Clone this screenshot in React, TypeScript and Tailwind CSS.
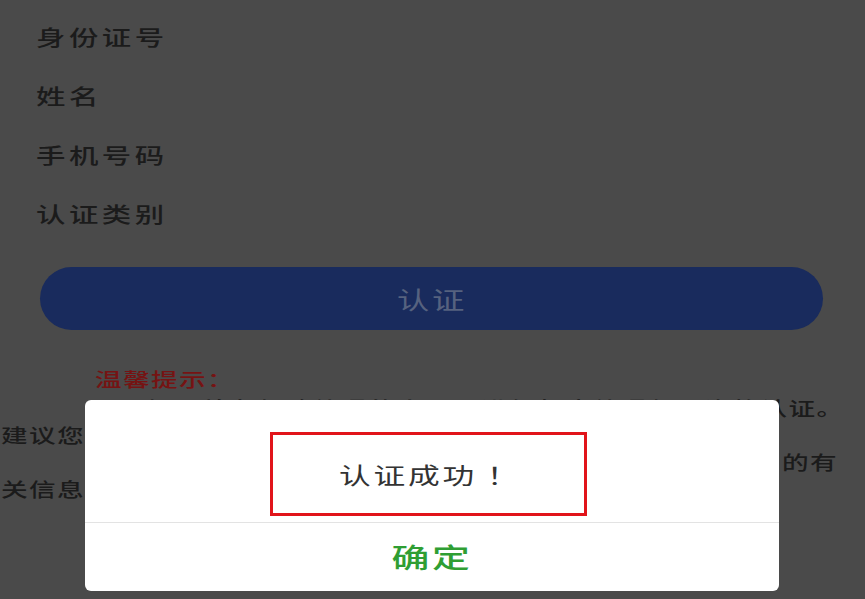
const cjk = { fontFamily: '"Noto Sans CJK SC", "Noto Sans", sans-serif' };

const fields = ['身份证号', '姓名', '手机号码', '认证类别'];

export default function App() {
  return (
    <div className="relative w-[865px] h-[599px] overflow-hidden bg-[#4a4a4a]" style={cjk}>
      {/* 表单 */}
      <div className="pt-[7px]">
        {fields.map((label) => (
          <div key={label} className="h-[59px] flex items-center pl-[36px]">
            <span className="inline-block origin-left scale-x-[1.4] text-[21px] font-medium tracking-[2.5px] text-[#1b1b1b]">
              {label}
            </span>
          </div>
        ))}
      </div>

      <div className="mt-[24px] ml-[40px] w-[783px] h-[63px] rounded-full bg-[#192b5d] flex items-center justify-center">
        <span className="inline-block scale-x-[1.35] text-[24px] tracking-[2px] text-[#56627f]">认证</span>
      </div>

      {/* 温馨提示 */}
      <div className="mt-[36px] pl-[95px] h-[26px] flex items-center">
        <span className="inline-block origin-left scale-x-[1.4] text-[19px] font-medium tracking-[1px] text-[#761313]">
          温馨提示：
        </span>
      </div>
      <div className="text-[19px] font-medium text-[#1b1b1b] leading-[27px] whitespace-nowrap">
        <div className="pl-[100px] pt-[2px]">
          <span className="inline-block origin-left scale-x-[1.4] tracking-[1px]">1、领取养老保险待遇的人员需进行年度待遇领取资格认证。</span>
        </div>
        <div className="pl-[1px]">
          <span className="inline-block origin-left scale-x-[1.4] tracking-[1px]">建议您</span>
        </div>
        <div className="flex justify-end pr-[27px]">
          <span className="inline-block origin-right scale-x-[1.4] tracking-[1px]">的有</span>
        </div>
        <div className="pl-[1px]">
          <span className="inline-block origin-left scale-x-[1.4] tracking-[1px]">关信息</span>
        </div>
      </div>

      {/* 弹窗 */}
      <div className="absolute left-[85px] top-[400px] w-[694px] h-[191px] bg-white rounded-[6px] flex flex-col">
        <div className="h-[122px] pt-[32px] pl-[185px]">
          <div className="w-[317px] h-[84px] border-[3px] border-[#e1141a] flex items-center justify-center pl-[4px]">
            <span className="inline-block scale-x-[1.38] text-[23px] tracking-[2px] text-[#333333]">认证成功 ！</span>
          </div>
        </div>
        <div className="h-px bg-[#e3e3e3]" />
        <div className="flex-1 flex items-center justify-center">
          <span className="inline-block scale-x-[1.4] text-[27px] font-medium tracking-[2px] text-[#2f9e33]">确定</span>
        </div>
      </div>
    </div>
  );
}
